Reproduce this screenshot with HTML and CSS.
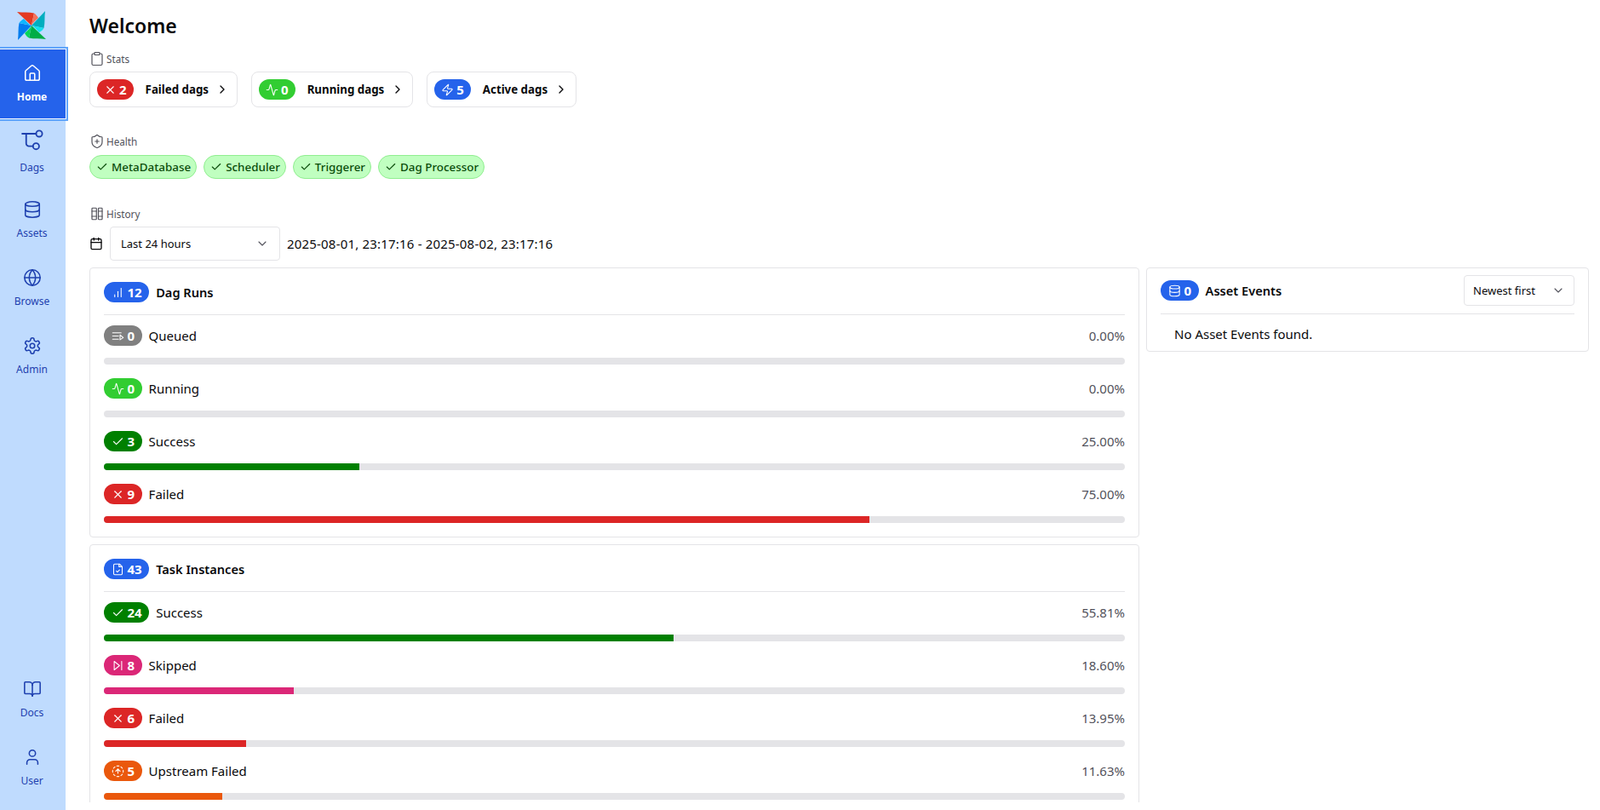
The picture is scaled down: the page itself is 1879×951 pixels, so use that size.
FILE: index.html
```html
<!DOCTYPE html>
<html lang="en">
<head>
    <meta charset="UTF-8">
    <meta name="viewport" content="width=device-width, initial-scale=1.0">
    <title>Airflow - Welcome</title>
    <link rel="stylesheet" href="styles.css">
</head>
<body>
    <svg class="sprite" aria-hidden="true">
        <symbol id="i-home" viewBox="0 0 24 24"><path d="M15 21v-8a1 1 0 0 0-1-1h-4a1 1 0 0 0-1 1v8"/><path d="M3 10a2 2 0 0 1 .709-1.528l7-5.999a2 2 0 0 1 2.582 0l7 5.999A2 2 0 0 1 21 10v9a2 2 0 0 1-2 2H5a2 2 0 0 1-2-2z"/></symbol>
        <symbol id="i-dags" viewBox="0 0 24 24"><path d="M1 5.500h15"/><path d="M5.300 5.500V16a3 3 0 0 0 3 3.100h4.300"/><circle cx="19.400" cy="5.500" r="3.300"/><circle cx="16" cy="19.100" r="3.300"/></symbol>
        <symbol id="i-database" viewBox="0 0 24 24"><ellipse cx="12" cy="5" rx="9" ry="3"/><path d="M3 5v14a9 3 0 0 0 18 0V5"/><path d="M3 12a9 3 0 0 0 18 0"/></symbol>
        <symbol id="i-globe" viewBox="0 0 24 24"><circle cx="12" cy="12" r="10"/><path d="M2 12h20"/><path d="M12 2a15.300 15.300 0 0 1 4 10 15.300 15.300 0 0 1-4 10 15.300 15.300 0 0 1-4-10 15.300 15.300 0 0 1 4-10z"/></symbol>
        <symbol id="i-gear" viewBox="0 0 24 24"><path d="M12.220 2h-.44a2 2 0 0 0-2 2v.18a2 2 0 0 1-1 1.730l-.43.25a2 2 0 0 1-2 0l-.15-.08a2 2 0 0 0-2.730.73l-.22.38a2 2 0 0 0 .73 2.730l.15.1a2 2 0 0 1 1 1.720v.51a2 2 0 0 1-1 1.740l-.15.09a2 2 0 0 0-.73 2.730l.22.38a2 2 0 0 0 2.730.73l.15-.08a2 2 0 0 1 2 0l.43.25a2 2 0 0 1 1 1.730V20a2 2 0 0 0 2 2h.44a2 2 0 0 0 2-2v-.18a2 2 0 0 1 1-1.730l.43-.25a2 2 0 0 1 2 0l.15.08a2 2 0 0 0 2.730-.73l.22-.39a2 2 0 0 0-.73-2.730l-.15-.08a2 2 0 0 1-1-1.740v-.5a2 2 0 0 1 1-1.740l.15-.09a2 2 0 0 0 .73-2.730l-.22-.38a2 2 0 0 0-2.730-.73l-.15.08a2 2 0 0 1-2 0l-.43-.25a2 2 0 0 1-1-1.730V4a2 2 0 0 0-2-2z"/><circle cx="12" cy="12" r="3"/></symbol>
        <symbol id="i-book" viewBox="0 0 24 24"><path d="M12 7v14"/><path d="M3 18a1 1 0 0 1-1-1V4a1 1 0 0 1 1-1h5a4 4 0 0 1 4 4 4 4 0 0 1 4-4h5a1 1 0 0 1 1 1v13a1 1 0 0 1-1 1h-6a3 3 0 0 0-3 3 3 3 0 0 0-3-3z"/></symbol>
        <symbol id="i-user" viewBox="0 0 24 24"><path d="M19 21v-2a4 4 0 0 0-4-4H9a4 4 0 0 0-4 4v2"/><circle cx="12" cy="7" r="4"/></symbol>
        <symbol id="i-clipboard" viewBox="0 0 24 24"><rect x="8" y="2" width="8" height="4" rx="1"/><path d="M16 4h2a2 2 0 0 1 2 2v14a2 2 0 0 1-2 2H6a2 2 0 0 1-2-2V6a2 2 0 0 1 2-2h2"/></symbol>
        <symbol id="i-shield" viewBox="0 0 24 24"><path d="M20 13c0 5-3.500 7.500-7.660 8.950a1 1 0 0 1-.67-.01C7.500 20.500 4 18 4 13V6a1 1 0 0 1 1-1c2 0 4.500-1.200 6.240-2.720a1.170 1.170 0 0 1 1.520 0C14.510 3.810 17 5 19 5a1 1 0 0 1 1 1z"/><path d="M9 12h6"/><path d="M12 9v6"/></symbol>
        <symbol id="i-library" viewBox="0 0 24 24"><rect x="4" y="3" width="7" height="18" rx="1"/><path d="M4 8h7"/><path d="M4 16h7"/><rect x="14" y="3" width="6" height="18" rx="1"/><path d="M14 8h6"/><path d="M14 16h6"/></symbol>
        <symbol id="i-calendar" viewBox="0 0 24 24"><path d="M8 2v4"/><path d="M16 2v4"/><rect x="3" y="4" width="18" height="18" rx="2"/><path d="M3 10h18"/></symbol>
        <symbol id="i-x" viewBox="0 0 24 24"><path d="M18 6 6 18"/><path d="m6 6 12 12"/></symbol>
        <symbol id="i-check" viewBox="0 0 24 24"><path d="M20 6 9 17l-5-5"/></symbol>
        <symbol id="i-activity" viewBox="0 0 24 24"><path d="M22 12h-2.480a2 2 0 0 0-1.930 1.460l-2.350 8.360a.25.25 0 0 1-.48 0L9.240 2.180a.25.25 0 0 0-.48 0l-2.350 8.360A2 2 0 0 1 4.490 12H2"/></symbol>
        <symbol id="i-zap" viewBox="0 0 24 24"><path d="M4 14a1 1 0 0 1-.78-1.630l9.900-10.200a.5.5 0 0 1 .86.46l-1.920 6.020A1 1 0 0 0 13 10h7a1 1 0 0 1 .78 1.630l-9.900 10.200a.5.5 0 0 1-.86-.46l1.920-6.020A1 1 0 0 0 11 14z"/></symbol>
        <symbol id="i-chevron-right" viewBox="0 0 24 24"><path d="m9 18 6-6-6-6"/></symbol>
        <symbol id="i-chevron-down" viewBox="0 0 24 24"><path d="m6 9 6 6 6-6"/></symbol>
        <symbol id="i-bars" viewBox="0 0 24 24"><path d="M18 20V4"/><path d="M12 20V10"/><path d="M6 20v-4"/></symbol>
        <symbol id="i-queue" viewBox="0 0 24 24"><path d="M13 12H2"/><path d="M18 6H2"/><path d="M13 18H2"/><path d="m16 10 6 5-6 4z"/></symbol>
        <symbol id="i-skip" viewBox="0 0 24 24"><path d="M19 4v16"/><path d="M5 4l10 8-10 8z"/></symbol>
        <symbol id="i-file-check" viewBox="0 0 24 24"><path d="M15 2H6a2 2 0 0 0-2 2v16a2 2 0 0 0 2 2h12a2 2 0 0 0 2-2V7z"/><path d="M14 2v5h6"/><path d="m9 15 2 2 4-4"/></symbol>
        <symbol id="i-upstream" viewBox="0 0 24 24"><path d="M10.100 2.180a9.900 9.900 0 0 1 3.800 0"/><path d="M17.600 3.710a9.900 9.900 0 0 1 2.690 2.690"/><path d="M21.820 10.100a9.900 9.900 0 0 1 0 3.800"/><path d="M20.290 17.600a9.900 9.900 0 0 1-2.690 2.690"/><path d="M13.900 21.820a9.900 9.900 0 0 1-3.800 0"/><path d="M6.400 20.290a9.900 9.900 0 0 1-2.690-2.690"/><path d="M2.180 13.900a9.900 9.900 0 0 1 0-3.800"/><path d="M3.710 6.400A9.900 9.900 0 0 1 6.400 3.710"/><path d="m8 12 4-4 4 4"/><path d="M12 16V8"/></symbol>
    </svg>

    <div class="app">
        <nav class="sidebar">
            <div class="logo">
                <svg viewBox="0 0 36 36" width="36" height="36">
                    <path fill="#e43921" d="M1 2 18 18C19 13 20 8 21 3.500 15 2 8 3 1 2Z"/>
                    <path fill="#f4725b" d="M18 18C19 13 20 8 21 3.500 23 4.500 25 7 26 9 24 11 20 14 18 18Z"/>
                    <g transform="rotate(90 18 18)">
                        <path fill="#00aebf" d="M1 2 18 18C19 13 20 8 21 3.500 15 2 8 3 1 2Z"/>
                        <path fill="#11e1ee" d="M18 18C19 13 20 8 21 3.500 23 4.500 25 7 26 9 24 11 20 14 18 18Z"/>
                    </g>
                    <g transform="rotate(180 18 18)">
                        <path fill="#00ad46" d="M1 2 18 18C19 13 20 8 21 3.500 15 2 8 3 1 2Z"/>
                        <path fill="#04d659" d="M18 18C19 13 20 8 21 3.500 23 4.500 25 7 26 9 24 11 20 14 18 18Z"/>
                    </g>
                    <g transform="rotate(270 18 18)">
                        <path fill="#017cee" d="M1 2 18 18C19 13 20 8 21 3.500 15 2 8 3 1 2Z"/>
                        <path fill="#0cb6ff" d="M18 18C19 13 20 8 21 3.500 23 4.500 25 7 26 9 24 11 20 14 18 18Z"/>
                    </g>
                </svg>
            </div>
            <a class="nav-item active"><svg class="icon nav-icon"><use href="#i-home"/></svg><span>Home</span></a>
            <a class="nav-item"><svg class="icon nav-icon large"><use href="#i-dags"/></svg><span>Dags</span></a>
            <a class="nav-item"><svg class="icon nav-icon"><use href="#i-database"/></svg><span>Assets</span></a>
            <a class="nav-item"><svg class="icon nav-icon"><use href="#i-globe"/></svg><span>Browse</span></a>
            <a class="nav-item"><svg class="icon nav-icon"><use href="#i-gear"/></svg><span>Admin</span></a>
            <div class="nav-spacer"></div>
            <a class="nav-item"><svg class="icon nav-icon"><use href="#i-book"/></svg><span>Docs</span></a>
            <a class="nav-item"><svg class="icon nav-icon"><use href="#i-user"/></svg><span>User</span></a>
        </nav>

        <main class="main">
            <h1>Welcome</h1>

            <div class="section-label"><svg class="icon"><use href="#i-clipboard"/></svg>Stats</div>
            <div class="stats-row">
                <a class="stat-card">
                    <span class="badge red"><svg class="icon"><use href="#i-x"/></svg>2</span>
                    <span class="stat-name">Failed dags</span>
                    <svg class="icon chevron"><use href="#i-chevron-right"/></svg>
                </a>
                <a class="stat-card">
                    <span class="badge lime"><svg class="icon"><use href="#i-activity"/></svg>0</span>
                    <span class="stat-name">Running dags</span>
                    <svg class="icon chevron"><use href="#i-chevron-right"/></svg>
                </a>
                <a class="stat-card">
                    <span class="badge blue"><svg class="icon"><use href="#i-zap"/></svg>5</span>
                    <span class="stat-name">Active dags</span>
                    <svg class="icon chevron"><use href="#i-chevron-right"/></svg>
                </a>
            </div>

            <div class="section-label health-label"><svg class="icon"><use href="#i-shield"/></svg>Health</div>
            <div class="health-row">
                <span class="health-pill"><svg class="icon"><use href="#i-check"/></svg>MetaDatabase</span>
                <span class="health-pill"><svg class="icon"><use href="#i-check"/></svg>Scheduler</span>
                <span class="health-pill"><svg class="icon"><use href="#i-check"/></svg>Triggerer</span>
                <span class="health-pill"><svg class="icon"><use href="#i-check"/></svg>Dag Processor</span>
            </div>

            <div class="section-label history-label"><svg class="icon"><use href="#i-library"/></svg>History</div>
            <div class="range-row">
                <svg class="icon calendar"><use href="#i-calendar"/></svg>
                <div class="select range-select">Last 24 hours<svg class="icon"><use href="#i-chevron-down"/></svg></div>
                <span class="range-text">2025-08-01, 23:17:16 - 2025-08-02, 23:17:16</span>
            </div>

            <div class="columns">
                <div class="left-col">
                    <section class="card">
                        <header class="card-head">
                            <span class="badge blue"><svg class="icon"><use href="#i-bars"/></svg>12</span>
                            <h2>Dag Runs</h2>
                        </header>
                        <div class="state-row">
                            <div class="state-line"><span class="badge gray"><svg class="icon"><use href="#i-queue"/></svg>0</span><span class="state-name">Queued</span><span class="state-pct">0.00%</span></div>
                            <div class="track"></div>
                        </div>
                        <div class="state-row">
                            <div class="state-line"><span class="badge lime"><svg class="icon"><use href="#i-activity"/></svg>0</span><span class="state-name">Running</span><span class="state-pct">0.00%</span></div>
                            <div class="track"></div>
                        </div>
                        <div class="state-row">
                            <div class="state-line"><span class="badge green"><svg class="icon"><use href="#i-check"/></svg>3</span><span class="state-name">Success</span><span class="state-pct">25.00%</span></div>
                            <div class="track"><div class="fill green" style="width: 25%"></div></div>
                        </div>
                        <div class="state-row">
                            <div class="state-line"><span class="badge red"><svg class="icon"><use href="#i-x"/></svg>9</span><span class="state-name">Failed</span><span class="state-pct">75.00%</span></div>
                            <div class="track"><div class="fill red" style="width: 75%"></div></div>
                        </div>
                    </section>

                    <section class="card">
                        <header class="card-head">
                            <span class="badge blue"><svg class="icon"><use href="#i-file-check"/></svg>43</span>
                            <h2>Task Instances</h2>
                        </header>
                        <div class="state-row">
                            <div class="state-line"><span class="badge green"><svg class="icon"><use href="#i-check"/></svg>24</span><span class="state-name">Success</span><span class="state-pct">55.81%</span></div>
                            <div class="track"><div class="fill green" style="width: 55.81%"></div></div>
                        </div>
                        <div class="state-row">
                            <div class="state-line"><span class="badge pink"><svg class="icon"><use href="#i-skip"/></svg>8</span><span class="state-name">Skipped</span><span class="state-pct">18.60%</span></div>
                            <div class="track"><div class="fill pink" style="width: 18.6%"></div></div>
                        </div>
                        <div class="state-row">
                            <div class="state-line"><span class="badge red"><svg class="icon"><use href="#i-x"/></svg>6</span><span class="state-name">Failed</span><span class="state-pct">13.95%</span></div>
                            <div class="track"><div class="fill red" style="width: 13.95%"></div></div>
                        </div>
                        <div class="state-row">
                            <div class="state-line"><span class="badge orange"><svg class="icon"><use href="#i-upstream"/></svg>5</span><span class="state-name">Upstream Failed</span><span class="state-pct">11.63%</span></div>
                            <div class="track"><div class="fill orange" style="width: 11.63%"></div></div>
                        </div>
                    </section>
                </div>

                <section class="card events-card">
                    <header class="card-head events-head">
                        <span class="badge blue"><svg class="icon"><use href="#i-database"/></svg>0</span>
                        <h2>Asset Events</h2>
                        <div class="select sort-select">Newest first<svg class="icon"><use href="#i-chevron-down"/></svg></div>
                    </header>
                    <p class="empty">No Asset Events found.</p>
                </section>
            </div>
        </main>
    </div>
</body>
</html>
```

FILE: styles.css
```css
* {
    box-sizing: border-box;
}
html, body {
    height: 100%;
    margin: 0;
    overflow: hidden;
}
body {
    font-family: "Noto Sans", "Open Sans", Arial, sans-serif;
    font-size: 15px;
    color: #09090b;
    background-color: white;
}
.sprite {
    display: none;
}
.icon {
    width: 14px;
    height: 14px;
    flex-shrink: 0;
    fill: none;
    stroke: currentColor;
    stroke-width: 2;
    stroke-linecap: round;
    stroke-linejoin: round;
}
.app {
    display: flex;
    height: 100vh;
}

/* sidebar */
.sidebar {
    width: 77px;
    flex-shrink: 0;
    display: flex;
    flex-direction: column;
    background-color: #bfdbfe;
    padding-bottom: 10px;
}
.logo {
    height: 58px;
    display: flex;
    justify-content: center;
    padding: 12px 3px 0 0;
}
.nav-item {
    height: 80px;
    display: flex;
    flex-direction: column;
    align-items: center;
    justify-content: center;
    gap: 8px;
    padding-right: 2px;
    font-size: 12px;
    color: #1e40af;
}
.nav-item.active {
    height: 81px;
    margin-bottom: -1px;
    background-color: #2563eb;
    color: white;
    font-weight: 700;
    position: relative;
    box-shadow: 0 0 0 1px white, 0 0 0 3px #60a5fa;
}
.nav-icon {
    width: 22px;
    height: 22px;
    stroke-width: 1.7;
}
.nav-icon.large {
    width: 26px;
    height: 26px;
    margin-bottom: 3px;
}
.nav-spacer {
    flex: 1;
}

/* main */
.main {
    flex: 1;
    min-width: 0;
    height: 942px;
    overflow: hidden;
    padding: 12px 13px 0 28px;
}
h1 {
    font-size: 23px;
    font-weight: 600;
    line-height: 36px;
    margin: 0 0 13px 0;
}
.section-label {
    display: flex;
    align-items: center;
    gap: 2px;
    height: 16px;
    font-size: 11.7px;
    color: #52525b;
}
.section-label .icon {
    width: 18px;
    height: 18px;
    stroke-width: 1.6;
}
.stats-row {
    display: flex;
    gap: 16px;
    margin-top: 7px;
}
.stat-card {
    display: flex;
    align-items: center;
    height: 42px;
    padding: 0 9px 0 8px;
    border: 1px solid #e4e4e7;
    border-radius: 8px;
}
.stat-card .badge {
    padding: 0 8px;
    gap: 3px;
}
.stat-name {
    font-weight: 700;
    font-size: 13.3px;
    margin-left: 14px;
    margin-right: 8px;
}
.chevron {
    width: 16px;
    height: 16px;
}
.badge {
    display: inline-flex;
    align-items: center;
    gap: 4px;
    height: 24px;
    padding: 0 8.5px;
    border-radius: 12px;
    font-size: 15px;
    font-weight: 700;
    color: white;
    flex-shrink: 0;
}
.badge .icon {
    width: 15px;
    height: 15px;
    stroke-width: 1.7;
}
.badge.blue { background-color: #2563eb; }
.badge.red { background-color: #dc2626; }
.badge.lime { background-color: #32cd32; }
.badge.green { background-color: #008000; }
.badge.gray { background-color: #808080; }
.badge.pink { background-color: #db2777; }
.badge.orange { background-color: #ea580c; }
.health-label {
    margin-top: 32px;
}
.health-row {
    display: flex;
    gap: 8px;
    margin-top: 8px;
}
.health-pill {
    display: inline-flex;
    align-items: center;
    gap: 4px;
    height: 28px;
    padding: 0 6px 0 7px;
    border: 1px solid #90ee90;
    border-radius: 14px;
    background-color: #c0ffc0;
    color: #0a4d0a;
    font-size: 13.4px;
    font-weight: 500;
}
.history-label {
    margin-top: 33px;
}
.range-row {
    display: flex;
    align-items: center;
    margin-top: 7px;
    height: 40px;
}
.calendar {
    width: 16px;
    height: 16px;
    margin-right: 8px;
}
.select {
    display: flex;
    align-items: center;
    justify-content: space-between;
    border: 1px solid #e4e4e7;
    border-radius: 4px;
    font-size: 13px;
}
.select .icon {
    width: 16px;
    height: 16px;
    color: #52525b;
    stroke-width: 1.7;
}
.range-select {
    width: 200px;
    height: 40px;
    padding: 0 12px;
}
.range-text {
    margin-left: 8px;
    letter-spacing: 0.19px;
}
.columns {
    display: flex;
    align-items: flex-start;
    gap: 8px;
    margin-top: 8px;
}
.left-col {
    width: 1233px;
    flex-shrink: 0;
    display: flex;
    flex-direction: column;
    gap: 8px;
}
.card {
    border: 1px solid #e4e4e7;
    border-radius: 4px;
    padding: 16px 16px 0 16px;
}
.card-head {
    display: flex;
    align-items: center;
    gap: 8px;
    padding-bottom: 14px;
    border-bottom: 1px solid #e4e4e7;
    margin-bottom: 12px;
}
h2 {
    font-size: 14.6px;
    font-weight: 600;
    margin: 0;
}
.state-row {
    height: 62px;
}
.state-line {
    display: flex;
    align-items: center;
    gap: 8px;
    height: 24px;
}
.state-pct {
    margin-left: auto;
    color: #52525b;
}
.track {
    height: 8px;
    margin-top: 14px;
    border-radius: 4px;
    background-color: #e4e4e7;
    overflow: hidden;
}
.fill {
    height: 100%;
}
.fill.green { background-color: #008000; }
.fill.red { background-color: #dc2626; }
.fill.pink { background-color: #db2777; }
.fill.orange { background-color: #ea580c; }
.events-card {
    flex: 1;
    min-width: 0;
    padding-top: 8px;
}
.events-head {
    height: 46px;
    padding-bottom: 9px;
    margin-bottom: 13px;
}
.sort-select {
    width: 130px;
    height: 36px;
    padding: 0 10px;
    margin-left: auto;
}
.empty {
    margin: 0 0 10px 16px;
    line-height: 20px;
}
```
